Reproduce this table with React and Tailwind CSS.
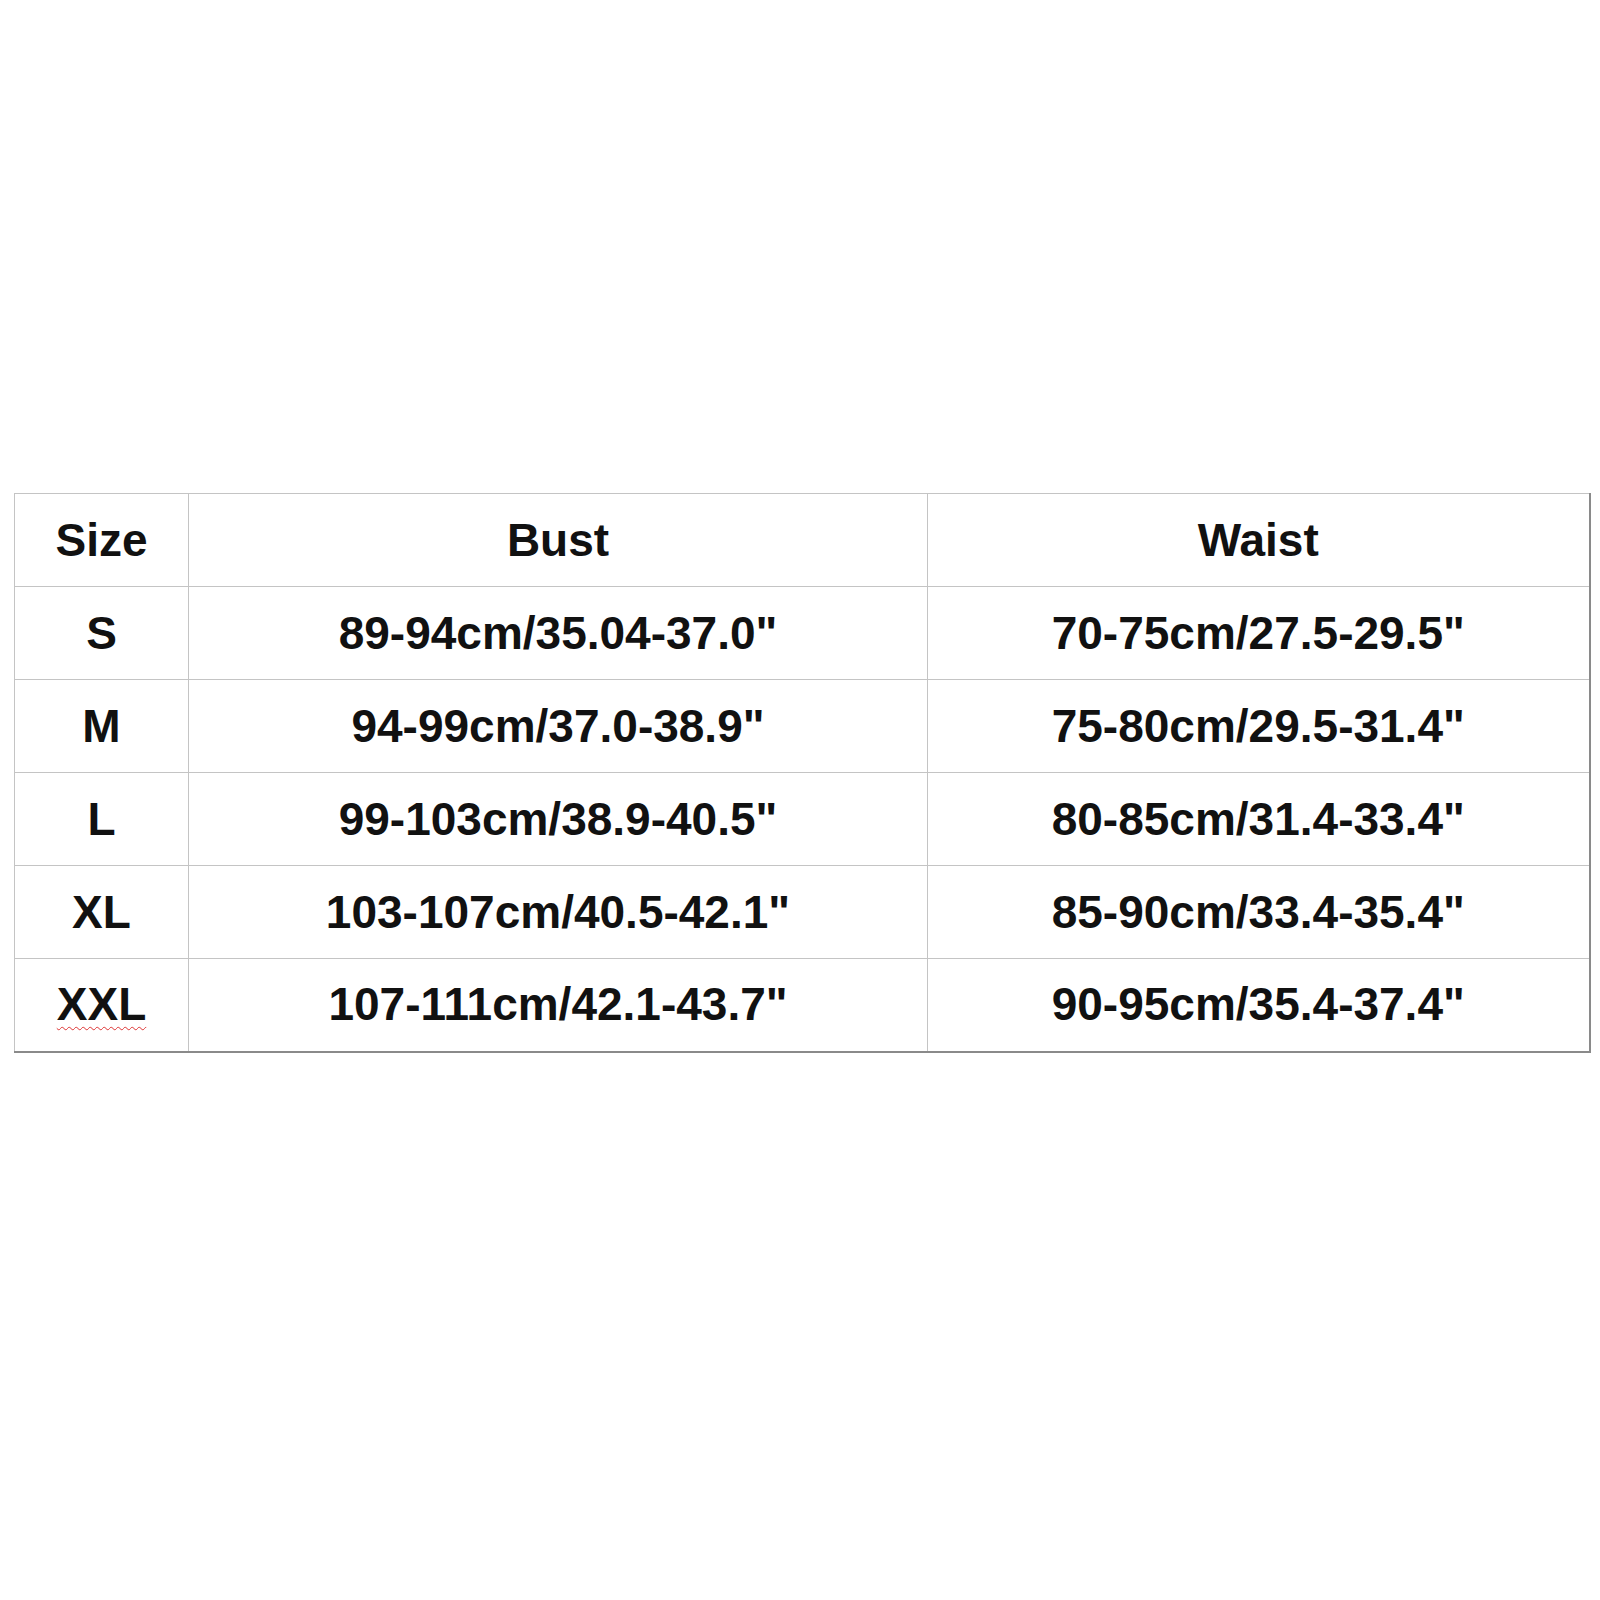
import React from 'react'

const rows = [
    { size: "S", bust: '89-94cm/35.04-37.0"', waist: '70-75cm/27.5-29.5"' },
    { size: "M", bust: '94-99cm/37.0-38.9"', waist: '75-80cm/29.5-31.4"' },
    { size: "L", bust: '99-103cm/38.9-40.5"', waist: '80-85cm/31.4-33.4"' },
    { size: "XL", bust: '103-107cm/40.5-42.1"', waist: '85-90cm/33.4-35.4"' },
    { size: "XXL", bust: '107-111cm/42.1-43.7"', waist: '90-95cm/35.4-37.4"', misspelled: true },
]

const cell = "border border-[#c4c4c4] text-center align-middle p-0"

const App = () => {
    return (
        <div className="w-[1600px] h-[1600px] bg-white pt-[493px] pl-[14px] font-['Liberation_Sans',Arial,sans-serif] font-bold text-[46px] text-[#111]">
            <table className="table-fixed border-collapse w-[1575px] border-r-2 border-b-2 border-r-[#8a8a8a] border-b-[#8a8a8a]">
                <colgroup>
                    <col className="w-[174px]" />
                    <col className="w-[739px]" />
                    <col className="w-[662px]" />
                </colgroup>
                <thead>
                    <tr className="h-[93px]">
                        <th className={cell}>Size</th>
                        <th className={cell}>Bust</th>
                        <th className={cell}>Waist</th>
                    </tr>
                </thead>
                <tbody>
                    {rows.map((row) => (
                        <tr key={row.size} className="h-[93px]">
                            <td className={cell}>
                                {row.misspelled ? (
                                    <span className="underline decoration-wavy decoration-[#d33] decoration-1 underline-offset-[6px]">{row.size}</span>
                                ) : row.size}
                            </td>
                            <td className={cell}>{row.bust}</td>
                            <td className={cell}>{row.waist}</td>
                        </tr>
                    ))}
                </tbody>
            </table>
        </div>
    )
}

export default App
